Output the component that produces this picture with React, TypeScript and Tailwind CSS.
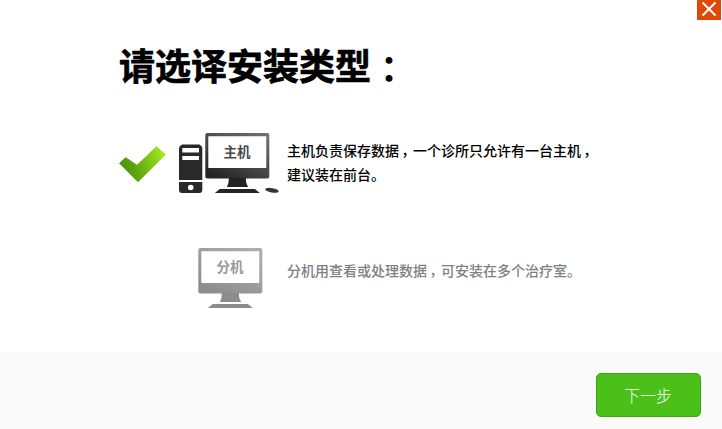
import React from 'react';

interface MonitorProps {
  label: string;
  id: string;
  from: string;
  to: string;
  textColor: string;
}

// 64x60 desktop monitor with its stand
const Monitor: React.FC<MonitorProps> = ({ label, id, from, to, textColor }) => (
  <g>
    <defs>
      <linearGradient id={id} x1="1" y1="0" x2="0.2" y2="1">
        <stop offset="0" stopColor={from} />
        <stop offset="1" stopColor={to} />
      </linearGradient>
    </defs>
    <path
      fillRule="evenodd"
      fill={`url(#${id})`}
      d="M2 0H62Q64 0 64 2V43.5Q64 45.5 62 45.5H2Q0 45.5 0 43.5V2Q0 0 2 0ZM3 3.2V35H61V3.2Z"
    />
    <path fill={to} d="M23.5 45H40.5Q40.5 51 43 54H21.5Q23.5 51 23.5 45Z" />
    <path fill={to} d="M14.5 56H49.5L54.5 60H9.5Z" />
    <text
      x="31.7"
      y="24"
      textAnchor="middle"
      fill={textColor}
      className="font-['Noto_Sans_CJK_SC',sans-serif] text-[13.5px] font-bold"
    >
      {label}
    </text>
  </g>
);

// The TC comma is centred in its cell, so it only needs lowering
const Comma = () => (
  <span
    lang="zh-TW"
    className="inline-block -translate-x-px translate-y-[4px] font-['Noto_Sans_CJK_TC',sans-serif] leading-none"
  >
    ，
  </span>
);

export default function App() {
  return (
    <div
      lang="zh-CN"
      className="flex h-[429px] w-[722px] flex-col overflow-hidden bg-white font-['Noto_Sans_CJK_SC',sans-serif]"
    >
      <header className="flex h-5 shrink-0 justify-end pr-px">
        <button className="flex h-5 w-6 items-center justify-center bg-[#e04808]" aria-label="关闭">
          <svg width="24" height="20" viewBox="0 0 24 20" fill="none" stroke="#fff" strokeWidth="2">
            <path d="M5.5 2.5L18.5 15.5M18.5 2.5L5.5 15.5" />
          </svg>
        </button>
      </header>

      <main className="flex flex-1 flex-col pl-[119px]">
        <h1 className="mt-[17px] h-[54px] whitespace-nowrap text-[36px] leading-[54px] font-bold text-black [-webkit-text-stroke:0.7px_black]">
          请选译安装类型
          <span
            lang="zh-TW"
            className="inline-block translate-y-[3px] font-['Noto_Sans_CJK_TC',sans-serif] leading-none [-webkit-text-stroke:0px]"
          >
            ：
          </span>
        </h1>

        <section className="mt-[42px] flex h-[61px]">
          <svg className="mt-[13px]" width="47" height="37" viewBox="0 0 47 37">
            <defs>
              <linearGradient id="tick" x1="0" y1="0.6" x2="1" y2="0.3">
                <stop offset="0" stopColor="#478c0c" />
                <stop offset="0.5" stopColor="#6fb810" />
                <stop offset="1" stopColor="#a2ea20" />
              </linearGradient>
            </defs>
            <path
              fill="url(#tick)"
              stroke="url(#tick)"
              strokeLinejoin="round"
              d="M0.7 17.3L6.7 11.7L18 19.3L37.5 0.8L46.3 8.5L19 35.7Z"
            />
          </svg>
          <svg className="ml-[13px]" width="101" height="61" viewBox="0 0 101 61">
            <path
              fillRule="evenodd"
              fill="#292929"
              d="M3 11.5H20.5Q23.3 13 23.3 15V47H0V15Q0 13 3 11.5ZM3.3 15V19.5H20V15ZM3.3 23V27H20V23Z"
            />
            <path
              fillRule="evenodd"
              fill="#292929"
              d="M0 49H23.3V57Q23.3 60 20.3 60H3Q0 60 0 57ZM11.7 51.7A2.8 2.8 0 1 0 11.7 57.3A2.8 2.8 0 1 0 11.7 51.7Z"
            />
            <g transform="translate(26.3 0)">
              <Monitor label="主机" id="host" from="#747474" to="#242424" textColor="#484848" />
            </g>
            <ellipse cx="92.9" cy="57.3" rx="6.9" ry="2.2" fill="#333" transform="rotate(10 92.9 57.3)" />
          </svg>
          <p className="ml-[7px] mt-[5px] whitespace-nowrap text-sm leading-6 font-medium text-black">
            主机负责保存数据
            <Comma />
            一个诊所只允许有一台主机
            <Comma />
            <br />
            建议装在前台。
          </p>
        </section>

        <section className="mt-[54px] flex h-[61px] pl-[79px]">
          <svg width="65" height="61" viewBox="0 0 65 61">
            <g transform="translate(0.3 0)">
              <Monitor label="分机" id="client" from="#b0b0b0" to="#8c8c8c" textColor="#999" />
            </g>
          </svg>
          <p className="ml-[24px] mt-[10px] whitespace-nowrap text-sm leading-6 font-medium text-[#808080]">
            分机用查看或处理数据
            <Comma />
            可安装在多个治疗室。
          </p>
        </section>
      </main>

      <footer className="flex h-[77px] shrink-0 justify-end bg-[#fafafa] pt-[21px] pr-[21px]">
        <button className="h-11 w-[105px] rounded-[5px] border border-[#3ca512] bg-[#4ac018] pr-px pb-px text-base font-light text-white">
          下一步
        </button>
      </footer>
    </div>
  );
}
